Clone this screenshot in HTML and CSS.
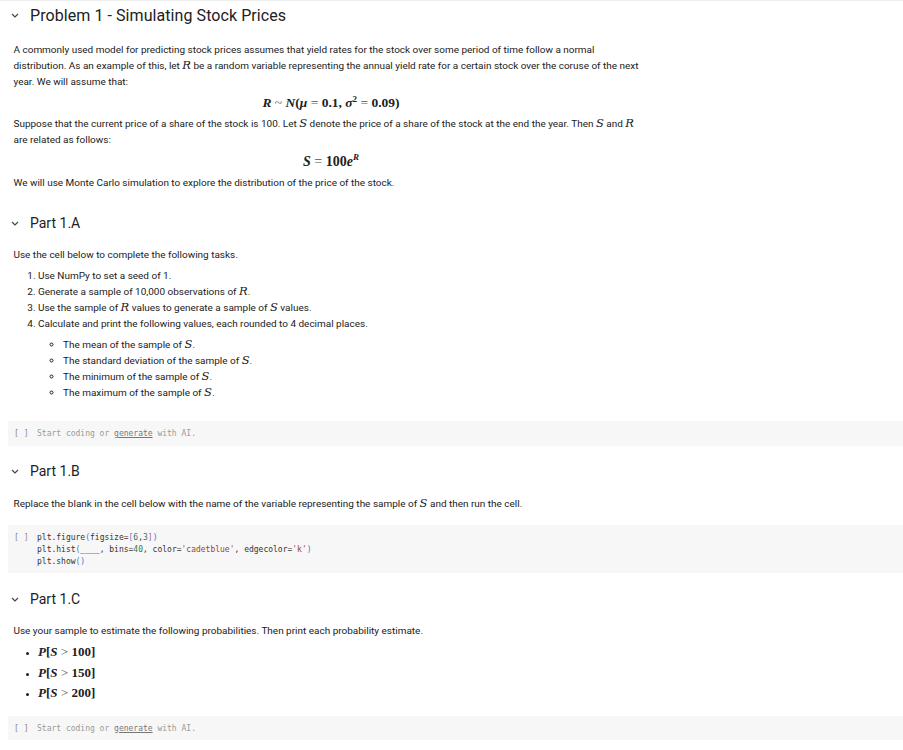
FILE: index.html
```html
<!DOCTYPE html>
<html lang="en">
<head>
    <meta charset="UTF-8">
    <title>Problem 1 - Simulating Stock Prices</title>
    <link rel="stylesheet" href="styles.css">
</head>
<body>
    <div class="notebook">
        <div class="heading">
            <svg class="chevron" viewBox="0 0 8 5"><path d="M1 1l3 3 3-3"/></svg>
            <h1>Problem 1 - Simulating Stock Prices</h1>
        </div>
        <div class="text intro">
            <p class="para">A commonly used model for predicting stock prices assumes that yield rates for the stock over some period of time follow a normal<br>distribution. As an example of this, let <i class="m">R</i> be a random variable representing the annual yield rate for a certain stock over the coruse of the next<br>year. We will assume that:</p>
            <div class="display first"><i>R</i> <span class="op">~</span> <i>N</i>(<i>μ</i> <span class="op">=</span> 0.1, <i>σ</i><sup>2</sup> <span class="op">=</span> 0.09)</div>
            <p class="para">Suppose that the current price of a share of the stock is 100. Let <i class="m">S</i> denote the price of a share of the stock at the end the year. Then <i class="m">S</i> and <i class="m">R</i><br>are related as follows:</p>
            <div class="display second"><i>S</i> <span class="op">=</span> 100<i>e</i><sup><i>R</i></sup></div>
            <p class="para">We will use Monte Carlo simulation to explore the distribution of the price of the stock.</p>
        </div>

        <div class="heading heading-a">
            <svg class="chevron" viewBox="0 0 8 5"><path d="M1 1l3 3 3-3"/></svg>
            <h2>Part 1.A</h2>
        </div>
        <div class="text text-a">
            <p class="para">Use the cell below to complete the following tasks.</p>
            <ol class="tasks">
                <li>Use NumPy to set a seed of 1.</li>
                <li>Generate a sample of 10,000 observations of <i class="m">R</i>.</li>
                <li>Use the sample of <i class="m">R</i> values to generate a sample of <i class="m">S</i> values.</li>
                <li>Calculate and print the following values, each rounded to 4 decimal places.
                    <ul class="subtasks">
                        <li>The mean of the sample of <i class="m">S</i>.</li>
                        <li>The standard deviation of the sample of <i class="m">S</i>.</li>
                        <li>The minimum of the sample of <i class="m">S</i>.</li>
                        <li>The maximum of the sample of <i class="m">S</i>.</li>
                    </ul>
                </li>
            </ol>
        </div>
        <div class="cell cell-a">
            <span class="run">[ ]</span>
            <div class="code hint">Start coding or <u>generate</u> with AI.</div>
        </div>

        <div class="heading heading-b">
            <svg class="chevron" viewBox="0 0 8 5"><path d="M1 1l3 3 3-3"/></svg>
            <h2>Part 1.B</h2>
        </div>
        <div class="text text-b">
            <p class="para">Replace the blank in the cell below with the name of the variable representing the sample of <i class="m">S</i> and then run the cell.</p>
        </div>
        <div class="cell cell-b">
            <span class="run">[ ]</span>
            <div class="code">plt.figure<span class="br">(</span>figsize=<span class="br2">[</span><span class="num">6</span>,<span class="num">3</span><span class="br2">]</span><span class="br">)</span><br>plt.hist<span class="br">(</span>____, bins=<span class="num">40</span>, color=<span class="str">'cadetblue'</span>, edgecolor=<span class="str">'k'</span><span class="br">)</span><br>plt.show<span class="br">()</span></div>
        </div>

        <div class="heading heading-c">
            <svg class="chevron" viewBox="0 0 8 5"><path d="M1 1l3 3 3-3"/></svg>
            <h2>Part 1.C</h2>
        </div>
        <div class="text text-c">
            <p class="para">Use your sample to estimate the following probabilities. Then print each probability estimate.</p>
            <ul class="probs">
                <li><i>P</i>[<i>S</i> <span class="op">&gt;</span> 100]</li>
                <li><i>P</i>[<i>S</i> <span class="op">&gt;</span> 150]</li>
                <li><i>P</i>[<i>S</i> <span class="op">&gt;</span> 200]</li>
            </ul>
        </div>
        <div class="cell cell-c">
            <span class="run">[ ]</span>
            <div class="code hint">Start coding or <u>generate</u> with AI.</div>
        </div>
    </div>
</body>
</html>
```

FILE: styles.css
```css
html, body {
    margin: 0;
    padding: 0;
    background: #fff;
}
body {
    font-family: Roboto, "Liberation Sans", sans-serif;
    color: #212121;
    height: 750px;
    overflow: hidden;
}
.notebook {
    border-top: 1px solid #eee;
}
.heading {
    display: flex;
    align-items: center;
    height: 28px;
    padding-left: 11px;
}
.heading h1, .heading h2 {
    margin: 0;
    font-weight: 400;
    font-size: 16px;
    letter-spacing: 0.07px;
}
.heading h2 {
    font-size: 14px;
    letter-spacing: 0;
}
.chevron {
    width: 8px;
    height: 5px;
    margin-right: 11px;
    fill: none;
    stroke: #444;
    stroke-width: 1.2;
}
.heading-a {
    margin-top: 18px;
}
.heading-b {
    margin-top: 11px;
}
.heading-c {
    margin-top: 12px;
}
.text {
    padding: 0 13.5px;
    font-size: 9.97px;
    line-height: 16px;
}
.intro {
    padding-top: 13px;
}
.text-a {
    margin-top: 10px;
}
.text-b {
    margin-top: 11px;
}
.text-c {
    margin-top: 10px;
}
.para {
    margin: 0;
}
.m {
    font-family: "DejaVu Serif", serif;
    font-size: 11.5px;
    line-height: 10px;
}
.display {
    font-family: "Liberation Serif", serif;
    font-weight: 700;
    font-size: 13.5px;
    text-align: center;
    line-height: 16px;
    width: 635px;
}
.display sup {
    font-size: 9px;
    line-height: 0;
}
.op {
    font-weight: 400;
    color: #555;
}
.display.first {
    margin: 5px 0;
}
.display.second {
    margin: 6px 0 5px;
    font-size: 14px;
}
.tasks {
    margin: 5px 0 0;
    padding-left: 24.5px;
}
.subtasks {
    margin: 5px 0 0;
    padding-left: 25px;
    list-style: circle;
}
.probs {
    margin: 3px 0 0;
    padding-left: 24.5px;
    font-family: "Liberation Serif", serif;
    font-size: 13px;
    font-weight: 700;
    line-height: 20.5px;
}
.probs li::marker {
    font-size: 9px;
}
.cell {
    display: flex;
    margin-left: 8px;
    padding: 7px 6px;
    background: #f7f7f7;
    font-family: "DejaVu Sans Mono", monospace;
    font-size: 8px;
    line-height: 12px;
}
.cell-a {
    margin-top: 20px;
    height: 11px;
}
.cell-b {
    margin-top: 13px;
    height: 34px;
}
.cell-c {
    margin-top: 12px;
    height: 10px;
}
.run {
    width: 23px;
    color: #888;
    flex: none;
}
.code {
    color: #333;
}
.hint {
    color: #9a9a9a;
}
.hint u {
    color: #777;
}
.br {
    color: #3a7bd5;
}
.br2 {
    color: #a05fc0;
}
.num {
    color: #2e7d5b;
}
.str {
    color: #a3412f;
}
```
